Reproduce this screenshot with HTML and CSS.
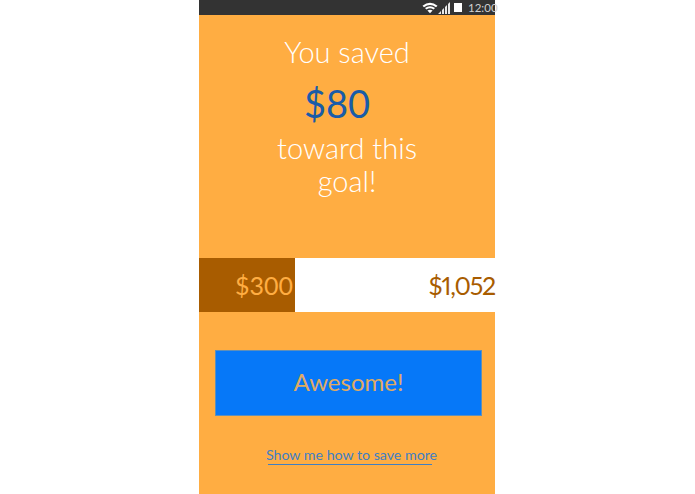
FILE: index.html
```html
<!DOCTYPE html>
<html lang="en">

<head>
    <meta charset="UTF-8">
    <title>You saved</title>
    <link rel="stylesheet" href="styles.css">
</head>

<body>
    <div class="phone">
        <div class="status-bar">
            <svg class="wifi" width="16" height="12" viewBox="0 0 16 11">
                <path d="M0.5 3.2 Q8 -2.6 15.5 3.2 L14 4.8 Q8 0.2 2 4.8 Z" fill="#fff" />
                <path d="M3 5.6 Q8 2 13 5.6 L11.6 7 Q8 4.6 4.4 7 Z" fill="#fff" />
                <path d="M5.4 8 Q8 6.4 10.6 8 L8 10.8 Z" fill="#fff" />
            </svg>
            <svg class="signal" width="12" height="12" viewBox="0 0 12 12">
                <path d="M0 12 L3 9 V12 Z M4 8 L6 6 V12 H4 Z M7 5 L9 3 V12 H7 Z M10 2 L12 0 V12 H10 Z" fill="#e8e8e8" />
            </svg>
            <div class="battery"></div>
            <span class="clock">12:00</span>
        </div>

        <div class="message">
            <p class="line">You saved</p>
            <p class="amount">$80</p>
            <p class="line goal">toward this<br>goal!</p>
        </div>

        <div class="progress">
            <div class="progress-done">$300</div>
            <div class="progress-total">$1,052</div>
        </div>

        <div class="button">Awesome!</div>

        <a class="more" href="#">Show me how to save more</a>
    </div>
</body>

</html>
```

FILE: styles.css
```css
body {
    margin: 0;
    padding: 0;
    background-color: white;
    font-family: "Lato", sans-serif;
    height: 494px;
    overflow: hidden;
}

.phone {
    width: 296px;
    height: 494px;
    background-color: #ffad42;
    display: flex;
    flex-direction: column;
    margin-left: 199px;
}

.status-bar {
    height: 15px;
    background-color: #333333;
    display: flex;
    justify-content: flex-end;
    align-items: center;
    flex-shrink: 0;
}

.signal {
    margin-right: 4px;
}

.battery {
    width: 8px;
    height: 9px;
    background-color: white;
    margin-right: 6px;
}

.clock {
    color: #d0d0d0;
    font-size: 11.5px;
    line-height: 15px;
    width: 27px;
    white-space: nowrap;
}

.message {
    color: white;
    text-align: center;
    padding-top: 20px;
    height: 243px;
    box-sizing: border-box;
    flex-shrink: 0;
}

.message p {
    margin: 0;
}

.line {
    font-size: 29px;
    line-height: 34px;
    font-weight: 300;
}

.message .amount {
    color: #1a5ca8;
    font-size: 38px;
    line-height: 44px;
    margin-top: 12px;
    padding-right: 20px;
}

.message .goal {
    margin-top: 6px;
    line-height: 33px;
}

.progress {
    display: flex;
    height: 54px;
    flex-shrink: 0;
    font-size: 25px;
    line-height: 54px;
    text-align: right;
}

.progress-done {
    width: 96px;
    box-sizing: border-box;
    padding-right: 2px;
    background-color: #a85c00;
    color: #ffad42;
}

.progress-total {
    flex: 1;
    background-color: white;
    color: #a85c00;
    letter-spacing: -1.2px;
    font-variant-numeric: proportional-nums;
}

.button {
    margin: 38px 13px 0 16px;
    height: 66px;
    flex-shrink: 0;
    background-color: #0678f8;
    color: #e0ab63;
    border: 1px solid #5f8fb8;
    box-sizing: border-box;
    font-size: 24px;
    line-height: 62px;
    text-align: center;
}

.more {
    align-self: center;
    margin-top: 29px;
    margin-left: 9px;
    color: #3f7fc4;
    font-size: 14.2px;
    line-height: 19px;
    text-decoration: none;
}

.more::after {
    content: "";
    display: block;
    height: 1px;
    margin: 0 5px 0 2px;
    background-color: #3f7fc4;
}
```
